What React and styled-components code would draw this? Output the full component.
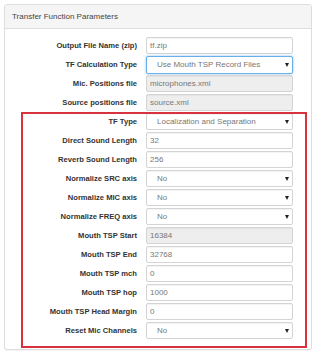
import React from 'react';
import styled, {createGlobalStyle} from 'styled-components';

const rows = [
    {label: 'Output File Name (zip)', value: 'tf.zip', kind: 'input'},
    {label: 'TF Calculation Type', value: 'Use Mouth TSP Record Files', kind: 'select', focused: true},
    {label: 'Mic. Positions file', value: 'microphones.xml', kind: 'readonly'},
    {label: 'Source positions file', value: 'source.xml', kind: 'readonly'},
    {label: 'TF Type', value: 'Localization and Separation', kind: 'select'},
    {label: 'Direct Sound Length', value: '32', kind: 'input'},
    {label: 'Reverb Sound Length', value: '256', kind: 'input'},
    {label: 'Normalize SRC axis', value: 'No', kind: 'select'},
    {label: 'Normalize MIC axis', value: 'No', kind: 'select'},
    {label: 'Normalize FREQ axis', value: 'No', kind: 'select'},
    {label: 'Mouth TSP Start', value: '16384', kind: 'readonly'},
    {label: 'Mouth TSP End', value: '32768', kind: 'input'},
    {label: 'Mouth TSP mch', value: '0', kind: 'input'},
    {label: 'Mouth TSP hop', value: '1000', kind: 'input'},
    {label: 'Mouth TSP Head Margin', value: '0', kind: 'input'},
    {label: 'Reset Mic Channels', value: 'No', kind: 'select'},
];

const App = () => {
    return (
        <>
        <GlobalStyle />
        <Page>
            <Panel>
                <Heading>Transfer Function Parameters</Heading>
                <Body>
                    {rows.map(row => (
                        <Row key={row.label}>
                            <Label>{row.label}</Label>
                            {row.kind === 'select' ? (
                                <Select $focused={row.focused}>
                                    <span>{row.value}</span>
                                    <Caret />
                                </Select>
                            ) : (
                                <Field $readonly={row.kind === 'readonly'}>{row.value}</Field>
                            )}
                        </Row>
                    ))}
                </Body>
                {/* red annotation rectangle drawn over the form */}
                <Highlight />
            </Panel>
        </Page>
        </>
    );
};

const GlobalStyle = createGlobalStyle`
    html, body {
        margin: 0;
        padding: 0;
        background: #fff;
    }
    body {
        font-family: "Liberation Sans", Arial, sans-serif;
    }
`;

const Page = styled.div`
    padding: 4px;
`;

const Panel = styled.div`
    position: relative;
    width: 308px;
    box-sizing: border-box;
    border: 1px solid #dddddd;
    border-radius: 3px;
    background: #fff;
    box-shadow: 0 1px 1px rgba(0,0,0,0.05);
`;

const Heading = styled.div`
    height: 23px;
    line-height: 23px;
    padding-left: 7px;
    background: #f5f5f5;
    border-bottom: 1px solid #dddddd;
    font-size: 8px;
    color: #444;
    border-radius: 2px 2px 0 0;
`;

const Body = styled.div`
    display: flex;
    flex-direction: column;
    gap: 2px;
    padding: 8px 0 10px;
`;

const Row = styled.div`
    display: flex;
    align-items: center;
    height: 17px;
`;

const Label = styled.div`
    width: 132px;
    text-align: right;
    font-size: 7.6px;
    font-weight: bold;
    color: #333;
    white-space: nowrap;
`;

const Field = styled.div`
    margin-left: 9px;
    width: 147px;
    height: 17px;
    box-sizing: border-box;
    border: 1px solid #d4d4d4;
    border-radius: 2px;
    padding-left: 3px;
    display: flex;
    align-items: center;
    font-size: 8px;
    color: #777;
    background: ${p => (p.$readonly ? '#eeeeee' : '#fff')};
    box-shadow: inset 0 1px 1px rgba(0,0,0,0.05);
`;

const Select = styled(Field)`
    justify-content: space-between;
    padding-left: 10px;
    padding-right: 3px;
    ${p => p.$focused && `
        border-color: #66afe9;
        box-shadow: 0 0 3px rgba(102,175,233,0.7);
        height: 18px;
    `}
`;

const Caret = styled.i`
    width: 0;
    height: 0;
    border-left: 2px solid transparent;
    border-right: 2px solid transparent;
    border-top: 4px solid #222;
`;

const Highlight = styled.div`
    position: absolute;
    left: 16px;
    top: 107px;
    width: 286px;
    height: 236px;
    box-sizing: border-box;
    border: 2px solid #d8323f;
    pointer-events: none;
`;

export default App;
